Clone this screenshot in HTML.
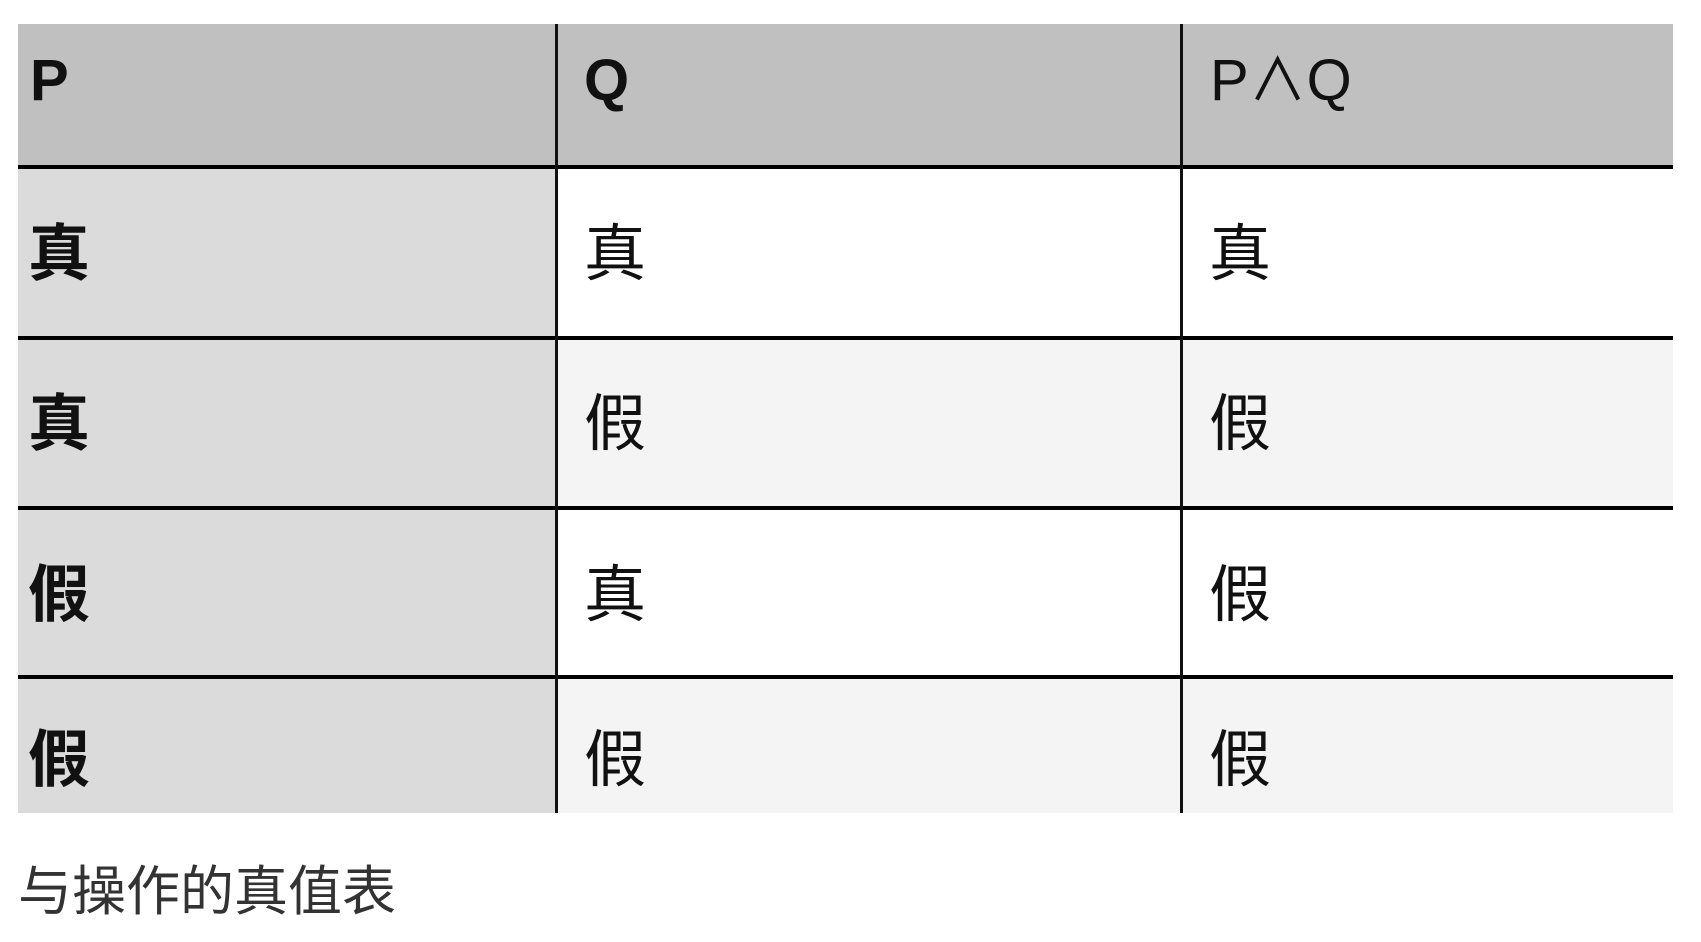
<!DOCTYPE html>
<html><head><meta charset="utf-8"><style>
html,body{margin:0;padding:0;background:#fff;width:1701px;height:942px;overflow:hidden}
body{position:relative;font-family:"Liberation Sans","Noto Sans CJK SC",sans-serif;color:#111}
.c{position:absolute;display:flex;align-items:center;font-size:62px;line-height:1}
.b{font-weight:bold}
.hl{position:absolute;left:18px;width:1655px;height:4px;background:#000}
.vl{position:absolute;top:24px;height:789px;width:3px;background:#111}
</style></head><body>
<div style="position:absolute;left:18px;top:24px;width:1655px;height:143px;background:#bfc0bf"></div>
<div style="position:absolute;left:18px;top:167px;width:538px;height:646px;background:#dbdbdb"></div>
<div style="position:absolute;left:556px;top:338px;width:1117px;height:170px;background:#f4f4f4"></div>
<div style="position:absolute;left:556px;top:677px;width:1117px;height:136px;background:#f4f4f4"></div>
<div class="hl" style="top:165px"></div>
<div class="hl" style="top:336px"></div>
<div class="hl" style="top:506px"></div>
<div class="hl" style="top:675px"></div>
<div class="vl" style="left:555px"></div>
<div class="vl" style="left:1180px"></div>

<div class="c b" style="left:30px;top:10px;height:142px;font-size:58px">P</div>
<div class="c b" style="left:584px;top:10px;height:142px;font-size:58px">Q</div>
<div class="c" style="left:1210px;top:10px;height:142px;font-size:58px">P∧Q</div>

<div class="c b" style="left:28px;top:171px;height:167px">真</div>
<div class="c" style="left:584px;top:171px;height:167px">真</div>
<div class="c" style="left:1209px;top:171px;height:167px">真</div>

<div class="c b" style="left:28px;top:342px;height:166px">真</div>
<div class="c" style="left:584px;top:342px;height:166px">假</div>
<div class="c" style="left:1209px;top:342px;height:166px">假</div>

<div class="c b" style="left:28px;top:513px;height:165px">假</div>
<div class="c" style="left:584px;top:513px;height:165px">真</div>
<div class="c" style="left:1209px;top:513px;height:165px">假</div>

<div class="c b" style="left:28px;top:694px;height:134px">假</div>
<div class="c" style="left:584px;top:694px;height:134px">假</div>
<div class="c" style="left:1209px;top:694px;height:134px">假</div>

<div class="c" style="left:18px;top:864px;height:56px;font-size:54px;color:#333">与操作的真值表</div>
</body></html>
